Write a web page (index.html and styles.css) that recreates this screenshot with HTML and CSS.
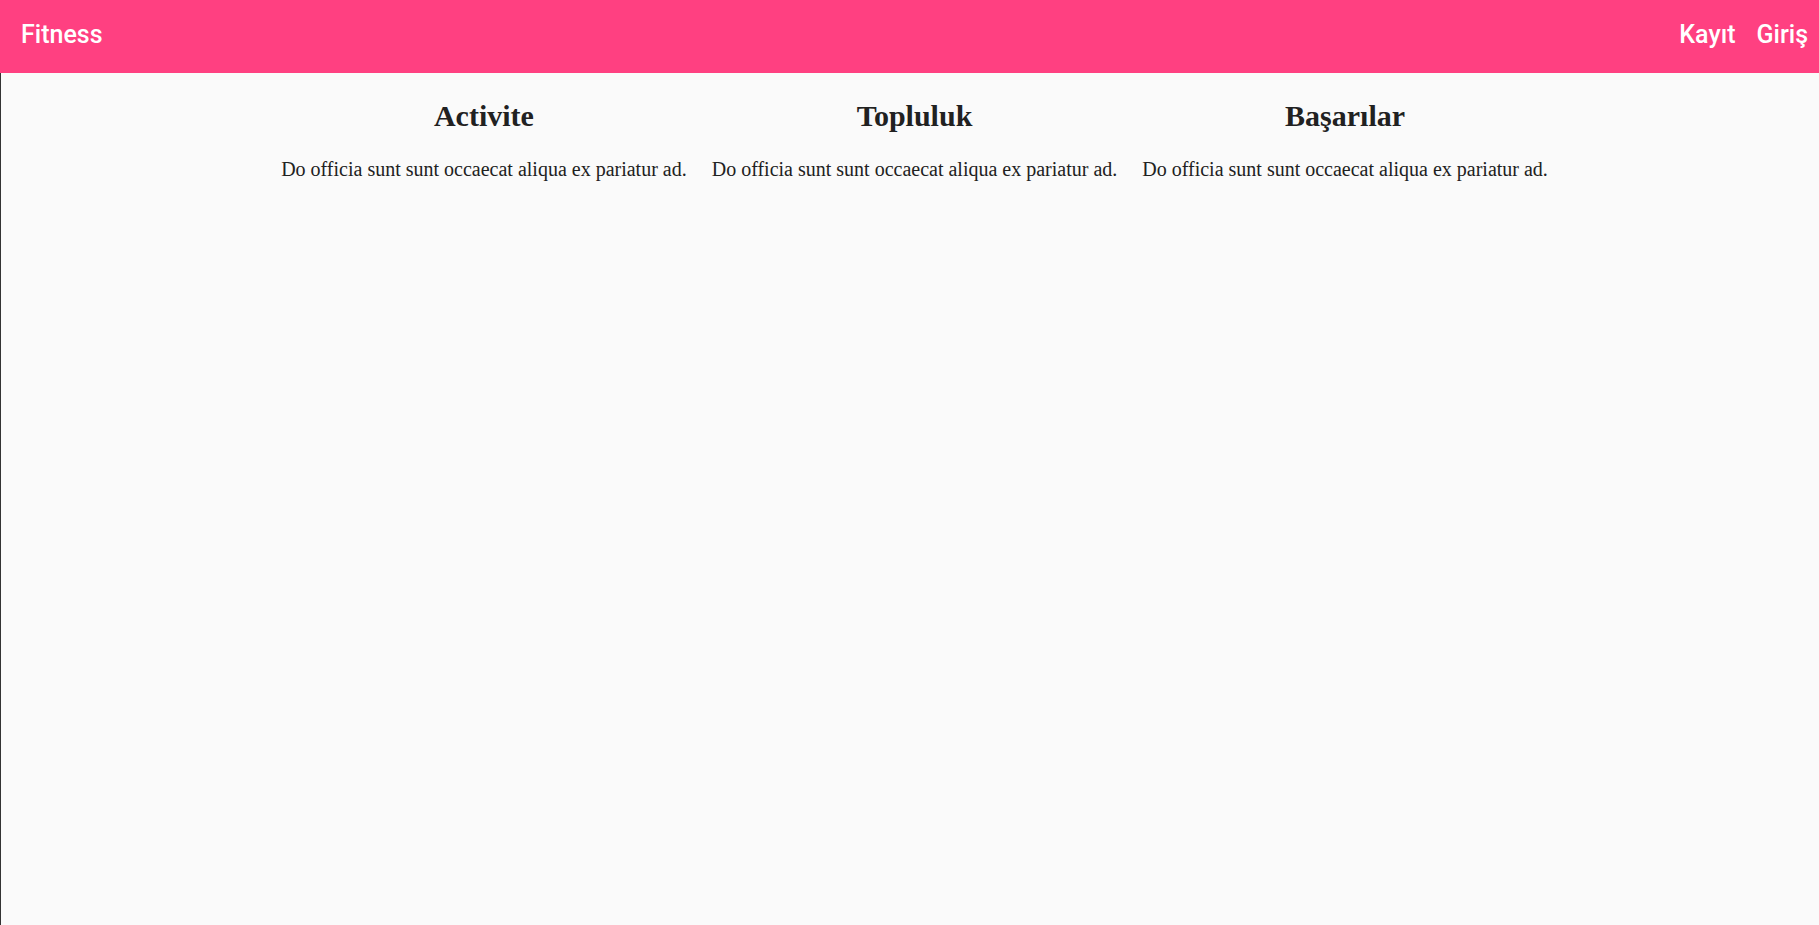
FILE: index.html
```html
<!DOCTYPE html>
<html lang="tr">
<head>
<meta charset="utf-8">
<title>Fitness</title>
<link rel="stylesheet" href="styles.css">
</head>
<body>
<header class="toolbar">
  <span class="brand">Fitness</span>
  <nav class="nav">
    <a class="nav-link" href="#">Kayıt</a>
    <a class="nav-link" href="#">Giriş</a>
  </nav>
</header>
<main class="content">
  <section class="features">
    <div class="feature">
      <h2 class="feature-title">Activite</h2>
      <p class="feature-text">Do officia sunt sunt occaecat aliqua ex pariatur ad.</p>
    </div>
    <div class="feature">
      <h2 class="feature-title">Topluluk</h2>
      <p class="feature-text">Do officia sunt sunt occaecat aliqua ex pariatur ad.</p>
    </div>
    <div class="feature">
      <h2 class="feature-title">Başarılar</h2>
      <p class="feature-text">Do officia sunt sunt occaecat aliqua ex pariatur ad.</p>
    </div>
  </section>
</main>
</body>
</html>
```
FILE: styles.css
```css
* { box-sizing: border-box; }
html, body {
  margin: 0;
  padding: 0;
  height: 100%;
}
body {
  background: #fafafa;
  color: #212121;
  font-family: "Liberation Serif", "Times New Roman", serif;
  display: flex;
  flex-direction: column;
}
.toolbar {
  height: 73px;
  flex: 0 0 73px;
  background: #ff4081;
  color: #ffffff;
  display: flex;
  align-items: center;
  justify-content: space-between;
  padding: 0 11px 4px 21px;
  font-family: Roboto, "Liberation Sans", sans-serif;
  font-weight: 500;
  font-size: 25px;
}
.brand { line-height: 30px; }
.nav {
  display: flex;
  gap: 21px;
}
.nav-link {
  color: #ffffff;
  text-decoration: none;
  line-height: 30px;
}
.content {
  flex: 1;
  border-left: 1px solid #333333;
}
.features {
  display: flex;
  justify-content: center;
  gap: 25px;
  padding-left: 9px;
}
.feature {
  text-align: center;
}
.feature-title {
  margin: 25px 0 25px;
  font-size: 30px;
  line-height: 36px;
  font-weight: bold;
}
.feature-text {
  margin: 0;
  font-size: 20px;
  line-height: 20px;
}
```
